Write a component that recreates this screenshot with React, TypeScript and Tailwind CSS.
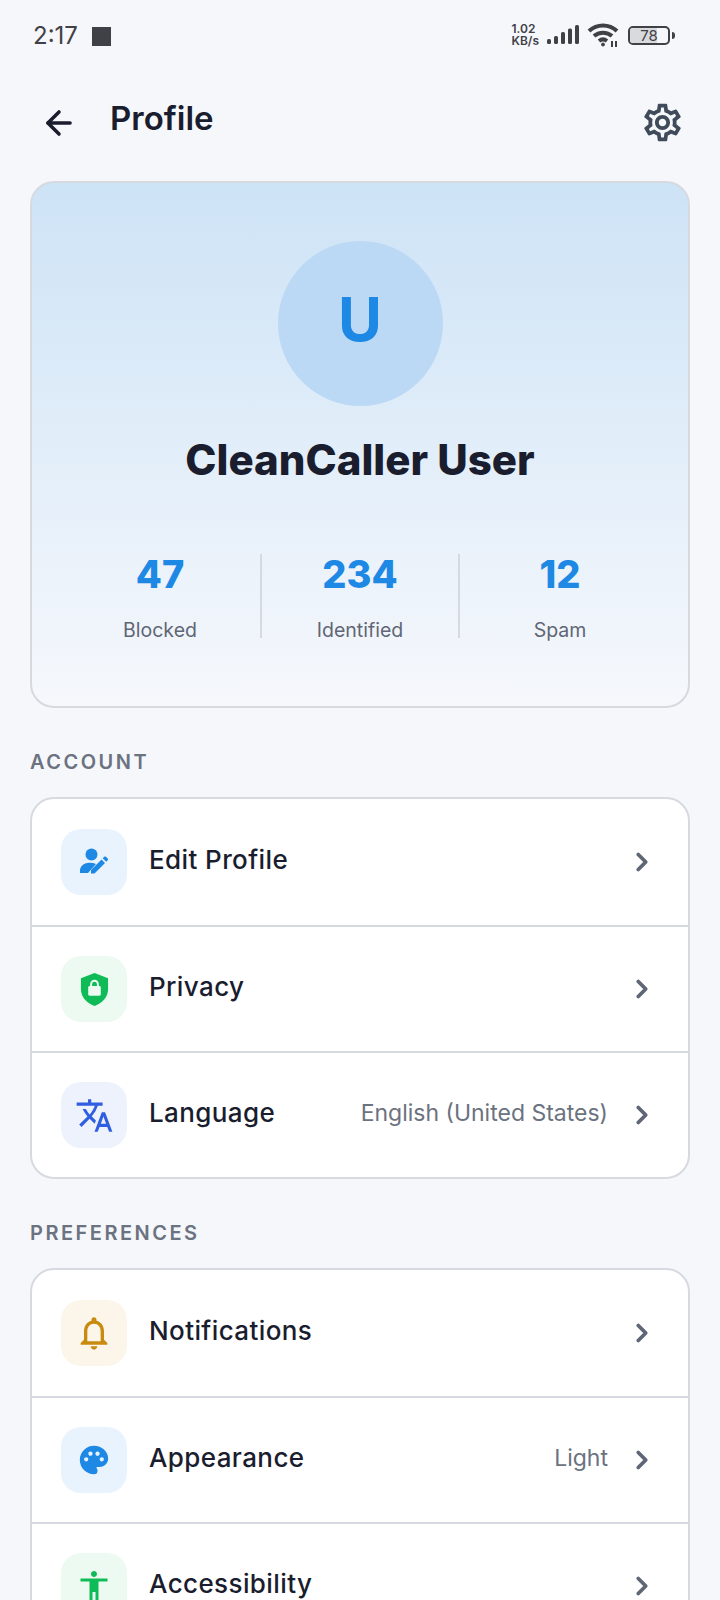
import { ArrowLeft, ChevronRight } from 'lucide-react'
import { MdAccessibility, MdOutlineNotifications, MdOutlineSettings, MdPalette, MdTranslate } from 'react-icons/md'
import type { ReactNode } from 'react'

type Row = { label: string; value?: string; iconBg: string; icon: ReactNode }

function PersonEditIcon() {
  return (
    <svg viewBox="0 0 32 32" className="h-8 w-8 text-[#1e88e5]" fill="currentColor">
      <circle cx="13.5" cy="8.5" r="6" />
      <path d="M2 27v-2.500c0-4 3.500-7 7.500-7.500 3-.4 6 0 8.500 1l-8 9H2.500z" />
      <path d="M13 27.500v-3.500l10.500-10.500 3.500 3.500L16.500 27.500zM24.700 12.300l1.500-1.500c.5-.5 1.200-.5 1.700 0l1.800 1.800c.5.500.5 1.200 0 1.700l-1.500 1.500z" />
    </svg>
  )
}

function ShieldLockIcon() {
  return (
    <svg viewBox="0 0 32 36" className="h-[35px] w-[31px]">
      <path d="M16 1 30 6.500v11c0 8.500-6 14.500-14 17.500C8 32 2 26 2 17.500v-11z" fill="#0fbb57" />
      <rect x="9.500" y="14.500" width="13" height="10" rx="1.500" fill="#ecfaf1" />
      <path d="M12.500 15v-2.500a3.500 3.500 0 0 1 7 0V15" fill="none" stroke="#ecfaf1" strokeWidth="2" />
    </svg>
  )
}

const ACCOUNT_ROWS: Row[] = [
  { label: 'Edit Profile', iconBg: 'bg-[#e9f3fe]', icon: <PersonEditIcon /> },
  { label: 'Privacy', iconBg: 'bg-[#ecfaf1]', icon: <ShieldLockIcon /> },
  { label: 'Language', value: 'English (United States)', iconBg: 'bg-[#eef2fd]', icon: <MdTranslate className="h-[39px] w-[39px] text-[#2f5ee0]" /> },
]

const PREFERENCE_ROWS: Row[] = [
  { label: 'Notifications', iconBg: 'bg-[#fcf5ea]', icon: <MdOutlineNotifications className="h-[40px] w-[40px] text-[#c98a10]" /> },
  { label: 'Appearance', value: 'Light', iconBg: 'bg-[#e9f3fe]', icon: <MdPalette className="h-[34px] w-[34px] text-[#1e88e5]" /> },
  { label: 'Accessibility', iconBg: 'bg-[#ecfaf1]', icon: <MdAccessibility className="h-[36px] w-[36px] text-[#0fbb57]" /> },
]

function StatusBar() {
  return (
    <div className="flex h-[80px] items-start justify-between pl-[33px] pr-[45px] pt-[23px] text-[#3f4147]">
      <div className="flex items-center gap-[14px]">
        <span className="text-[24px] leading-[26px]">2:17</span>
        <span className="h-[19px] w-[19px] bg-[#3f4147]" />
      </div>
      <div className="flex items-center gap-[7px]">
        <div className="text-[12px] font-semibold leading-[12px]">
          <div>1.02</div>
          <div>KB/s</div>
        </div>
        <svg viewBox="0 0 32 20" className="ml-[1px] h-5 w-8" fill="currentColor">
          <rect x="0" y="14" width="4" height="5" rx="1.500" />
          <rect x="7" y="11" width="4" height="8" rx="1.500" />
          <rect x="14" y="7" width="4" height="12" rx="1.500" />
          <rect x="21" y="3.500" width="4" height="15.500" rx="1.500" />
          <rect x="28" y="0" width="4" height="19" rx="1.500" />
        </svg>
        <svg viewBox="0 0 32 24" className="ml-[1px] h-6 w-8" fill="none" stroke="currentColor" strokeWidth="4">
          <path d="M2 8c8-7.500 20-7.500 28 0" />
          <path d="M7 13c5-4.500 13-4.500 18 0" />
          <path d="M12 18c2.500-2 5.500-2 8 0" />
          <circle cx="16" cy="21.500" r="1.500" fill="currentColor" strokeWidth="1" />
          <path d="M25 24v-6M29 24v-6" strokeWidth="2" />
        </svg>
        <div className="ml-[2px] flex items-center gap-[2px]">
          <div className="relative flex h-[19px] w-[42px] items-center justify-center overflow-hidden rounded-[5px] border-2 border-[#3f4147]">
            <span className="absolute bottom-0 left-0 top-0 w-[72%] bg-[#d8dade]" />
            <span className="relative text-[15px] leading-none">78</span>
          </div>
          <span className="h-[7px] w-[3px] rounded-r-sm bg-[#3f4147]" />
        </div>
      </div>
    </div>
  )
}

function Stat({ value, label }: { value: string; label: string }) {
  return (
    <div className="flex flex-col items-center">
      <span className="text-[38px] font-extrabold leading-[40px] text-[#1e88e5]">{value}</span>
      <span className="mt-[28px] text-[19.500px] leading-[16px] text-[#5f6675]">{label}</span>
    </div>
  )
}

function SectionTitle({ children }: { children: ReactNode }) {
  return <h2 className="text-[20px] font-semibold leading-[24px] tracking-[2.500px] text-[#6b7280]">{children}</h2>
}

function ListCard({ rows }: { rows: Row[] }) {
  return (
    <div className="overflow-hidden rounded-[24px] border-2 border-[#d6dae0] bg-white">
      {rows.map((row, index) => (
        <div key={row.label} className={`flex h-[126px] items-center pl-[29px] pr-[31px] ${index > 0 ? 'border-t-2 border-[#d6dae0]' : ''}`}>
          <div className={`flex h-[66px] w-[66px] shrink-0 items-center justify-center rounded-[20px] ${row.iconBg}`}>{row.icon}</div>
          <span className="ml-[22px] pb-[6px] text-[26px] font-medium tracking-[0.4px] text-[#1a1d2e]">{row.label}</span>
          {row.value && <span className="ml-auto pb-[4px] text-[23px] text-[#6b7280]">{row.value}</span>}
          <ChevronRight className={`h-[30px] w-[30px] text-[#5f6675] ${row.value ? 'ml-[19px]' : 'ml-auto'}`} strokeWidth={3} />
        </div>
      ))}
    </div>
  )
}

export default function App() {
  return (
    <div className="h-[1600px] overflow-hidden bg-[#f5f7fb]" style={{ fontFamily: 'Inter, "Noto Sans", sans-serif' }}>
      <StatusBar />
      <header className="flex h-[101px] items-center justify-between pb-[16px] pl-[40px] pr-[35px]">
        <div className="flex items-center">
          <ArrowLeft className="h-[38px] w-[38px] text-[#1a1d2e]" strokeWidth={2.2} />
          <h1 className="ml-[32px] pb-[8px] text-[33px] font-semibold text-[#1a1d2e]">Profile</h1>
        </div>
        <MdOutlineSettings className="h-[45px] w-[45px] text-[#3f4a5a]" />
      </header>

      <main className="px-[30px]">
        <section className="h-[527px] rounded-[24px] border-2 border-[#d6dae0] bg-gradient-to-b from-[#cde3f6] to-[#f6f8fc] pt-[58px]">
          <div className="mx-auto flex h-[165px] w-[165px] items-center justify-center rounded-full bg-[#bbd9f5] pb-[10px]">
            <span className="text-[60px] font-bold text-[#1e88e5]">U</span>
          </div>
          <h2 className="mt-[26px] text-center text-[42px] font-extrabold leading-[56px] text-[#1a1d2e]">CleanCaller User</h2>
          <div className="mt-[66px] grid grid-cols-3 px-[28px]">
            <Stat value="47" label="Blocked" />
            <div className="border-x-2 border-[#d6dae0]">
              <Stat value="234" label="Identified" />
            </div>
            <Stat value="12" label="Spam" />
          </div>
        </section>

        <div className="mt-[42px]">
          <SectionTitle>ACCOUNT</SectionTitle>
        </div>
        <div className="mt-[23px]">
          <ListCard rows={ACCOUNT_ROWS} />
        </div>

        <div className="mt-[42px]">
          <SectionTitle>PREFERENCES</SectionTitle>
        </div>
        <div className="mt-[23px]">
          <ListCard rows={PREFERENCE_ROWS} />
        </div>
      </main>
    </div>
  )
}
